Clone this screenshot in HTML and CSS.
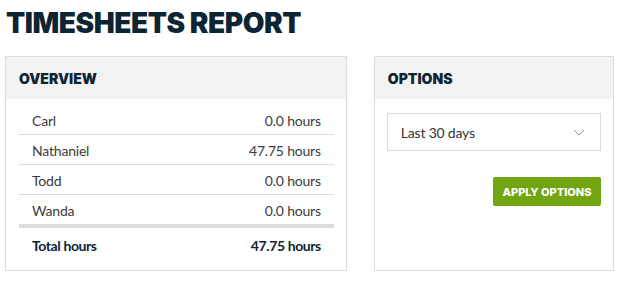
FILE: index.html
```html
<!DOCTYPE html>
<html>
  <head>
    <title>Timesheets report</title>
    <link rel="stylesheet" href="styles.css">
  </head>
  <body>
    <div class="page">
      <h1 class="title">Timesheets report</h1>

      <div class="columns">
        <div class="panel overview">
          <div class="panel-head">Overview</div>
          <div class="panel-body">
            <div class="row"><span>Carl</span><span>0.0 hours</span></div>
            <div class="row"><span>Nathaniel</span><span>47.75 hours</span></div>
            <div class="row"><span>Todd</span><span>0.0 hours</span></div>
            <div class="row last"><span>Wanda</span><span>0.0 hours</span></div>
            <div class="row total"><span>Total hours</span><span>47.75 hours</span></div>
          </div>
        </div>

        <div class="panel options">
          <div class="panel-head">Options</div>
          <div class="panel-body">
            <div class="select">
              <span>Last 30 days</span>
              <svg width="12" height="7" viewBox="0 0 12 7"><path d="M1 1l5 5 5-5" fill="none" stroke="#8a8a8a" stroke-width="1"/></svg>
            </div>
            <div class="actions">
              <button class="apply">Apply options</button>
            </div>
          </div>
        </div>
      </div>
    </div>
  </body>
</html>
```

FILE: styles.css
```css
body {
  margin: 0;
  font-family: Lato, "Liberation Sans", sans-serif;
  color: #3c3c3c;
  background: #fff;
}

.page {
  padding: 3px 8px 0 5px;
}

.title {
  margin: 0 0 13px 1px;
  font-family: Inter, sans-serif;
  font-weight: 900;
  font-size: 28px;
  line-height: 40px;
  text-transform: uppercase;
  color: #0d2433;
  letter-spacing: -0.45px;
}

.columns {
  display: flex;
  gap: 27px;
  align-items: flex-start;
}

.panel {
  border: 1px solid #dcdcdc;
  box-sizing: border-box;
  height: 215px;
}
.overview { width: 343px; }
.options { width: 241px; }

.panel-head {
  background: #f2f2f2;
  height: 42px;
  padding: 0 13px;
  display: flex;
  align-items: center;
  font-family: Inter, sans-serif;
  font-weight: 900;
  font-size: 14px;
  text-transform: uppercase;
  color: #0d2433;
}

.overview .panel-body {
  padding: 6px 12px 0 13px;
}

.row {
  display: flex;
  justify-content: space-between;
  box-sizing: border-box;
  height: 30px;
  padding: 2px 13px 0;
  align-items: center;
  font-size: 14px;
  letter-spacing: -0.2px;
  border-bottom: 1px solid #dcdcdc;
}
.row.last {
  height: 33px;
  border-bottom: 4px solid #dcdcdc;
}
.row.total {
  border-bottom: none;
  height: 32px;
  font-weight: bold;
  letter-spacing: -0.4px;
  color: #0d2433;
}

.options .panel-body {
  padding: 14px 12px 0 12px;
}

.select {
  height: 38px;
  box-sizing: border-box;
  border: 1px solid #dcdcdc;
  display: flex;
  align-items: center;
  justify-content: space-between;
  padding: 0 15px 0 13px;
  font-size: 14px;
  letter-spacing: -0.2px;
  color: #333;
}

.actions {
  display: flex;
  justify-content: flex-end;
  margin-top: 26px;
}

.apply {
  width: 108px;
  height: 29px;
  border: none;
  border-radius: 2px;
  background: #72a512;
  color: #fff;
  font-family: Inter, sans-serif;
  font-weight: 800;
  font-size: 11px;
  text-transform: uppercase;
  padding: 0;
}
```
